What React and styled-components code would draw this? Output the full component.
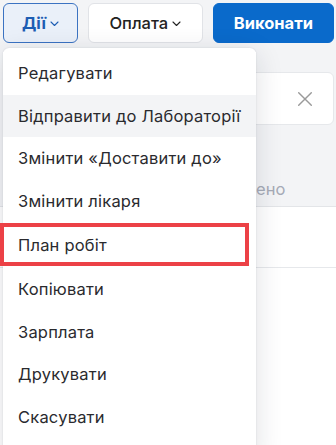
import React from "react";
import styled, { createGlobalStyle } from "styled-components";

const GlobalStyle = createGlobalStyle`
  html, body {
    margin: 0;
    padding: 0;
    background: #f3f4f6;
    font-family: Inter, "Noto Sans", sans-serif;
    color: #2a2a2e;
  }
  * { box-sizing: border-box; }
`;

const menuItems = [
  "Редагувати",
  "Відправити до Лабораторії",
  "Змінити «Доставити до»",
  "Змінити лікаря",
  "План робіт",
  "Копіювати",
  "Зарплата",
  "Друкувати",
  "Скасувати",
];

const Chevron = ({ color = "currentColor" }) => (
  <svg width="9" height="6" viewBox="0 0 9 6" fill="none">
    <path d="M1 1l3.5 3.5L8 1" stroke={color} strokeWidth="1.1" strokeLinecap="round" strokeLinejoin="round" />
  </svg>
);

export default function App() {
  return (
    <Page>
      <GlobalStyle />
      <Toolbar>
        <ToolButton variant="active">
          Дії <Chevron />
        </ToolButton>
        <ToolButton variant="plain" wide>
          Оплата <Chevron />
        </ToolButton>
        <ToolButton variant="primary" wide>
          Виконати
        </ToolButton>
      </Toolbar>

      <Content>
        <SearchBox>
          <ClearIcon viewBox="0 0 20 20">
            <path d="M3 3l14 14M17 3L3 17" />
          </ClearIcon>
        </SearchBox>
        <Tabs>
          <Tab>Завершено</Tab>
        </Tabs>
        <TableRow />
        <TableRow tall />
      </Content>

      <Menu>
        {menuItems.map((item, index) => (
          <MenuItem key={index} hovered={index === 1} marked={index === 4}>
            {item}
          </MenuItem>
        ))}
      </Menu>
    </Page>
  );
}

const Page = styled.div`
  position: relative;
  width: 336px;
  height: 445px;
  overflow: hidden;
  background: #f3f4f6;
`;

const Toolbar = styled.div`
  display: flex;
  gap: 10px;
  padding: 3px 2px 0 3px;
  height: 43px;
`;

const ToolButton = styled.button`
  display: flex;
  align-items: center;
  justify-content: center;
  gap: 4px;
  height: 40px;
  padding: 0 ${({ wide }) => (wide ? "20px" : "18px")};
  border-radius: 6px;
  font-family: Inter, "Noto Sans", sans-serif;
  font-size: 16.5px;
  cursor: pointer;
  ${({ variant }) =>
    variant === "active"
      ? `
    width: 75px;
    background: #eaf0f9;
    border: 1px solid #3b73c2;
    color: #1d5db3;
    font-weight: 700;
  `
      : variant === "primary"
      ? `
    flex: 1;
    background: #0a6acb;
    border: 1px solid #0a6acb;
    color: #ffffff;
    font-weight: 700;
  `
      : `
    width: 116px;
    background: #ffffff;
    border: 1px solid #e1e3e7;
    color: #222;
    font-weight: 500;
  `}
  svg {
    margin-top: 2px;
  }
`;

const Content = styled.div`
  display: flex;
  flex-direction: column;
  padding-top: 29px;
`;

const SearchBox = styled.div`
  display: flex;
  align-items: center;
  justify-content: flex-end;
  height: 53px;
  margin: 0 2px 0 20px;
  padding-right: 19px;
  background: #ffffff;
  border: 1px solid #e6e8eb;
  border-radius: 6px;
`;

const ClearIcon = styled.svg`
  width: 18px;
  height: 18px;
  fill: none;
  stroke: #9a9a9a;
  stroke-width: 1.6;
  stroke-linecap: round;
`;

const Tabs = styled.div`
  display: flex;
  align-items: flex-end;
  height: 82px;
  padding: 0 0 7px 194px;
  border-bottom: 1px solid #e3e5e8;
`;

const Tab = styled.span`
  font-size: 16.5px;
  color: #a6abb6;
`;

const TableRow = styled.div`
  height: ${({ tall }) => (tall ? "200px" : "61px")};
  background: #ffffff;
  border-bottom: 1px solid #e6e8eb;
`;

const Menu = styled.ul`
  position: absolute;
  top: 48px;
  left: 3px;
  width: 253px;
  margin: 0;
  padding: 4px 0 20px;
  list-style: none;
  background: #ffffff;
  border-radius: 6px;
  box-shadow: 0 6px 28px rgba(20, 30, 50, 0.14), 0 0 2px rgba(20, 30, 50, 0.12);
`;

const MenuItem = styled.li`
  position: relative;
  display: flex;
  align-items: center;
  height: ${({ marked }) => (marked ? "46px" : "42.5px")};
  padding: 0 15px;
  font-size: 16.5px;
  letter-spacing: 0.2px;
  color: #2a2a2e;
  white-space: nowrap;
  background: ${({ hovered }) => (hovered ? "#f3f4f6" : "#ffffff")};
  ${({ marked }) =>
    marked &&
    `
    &::after {
      content: "";
      position: absolute;
      left: -3px;
      top: 1px;
      width: 249px;
      height: 43px;
      border: 4px solid #ec4146;
      box-sizing: border-box;
    }
  `}
`;
